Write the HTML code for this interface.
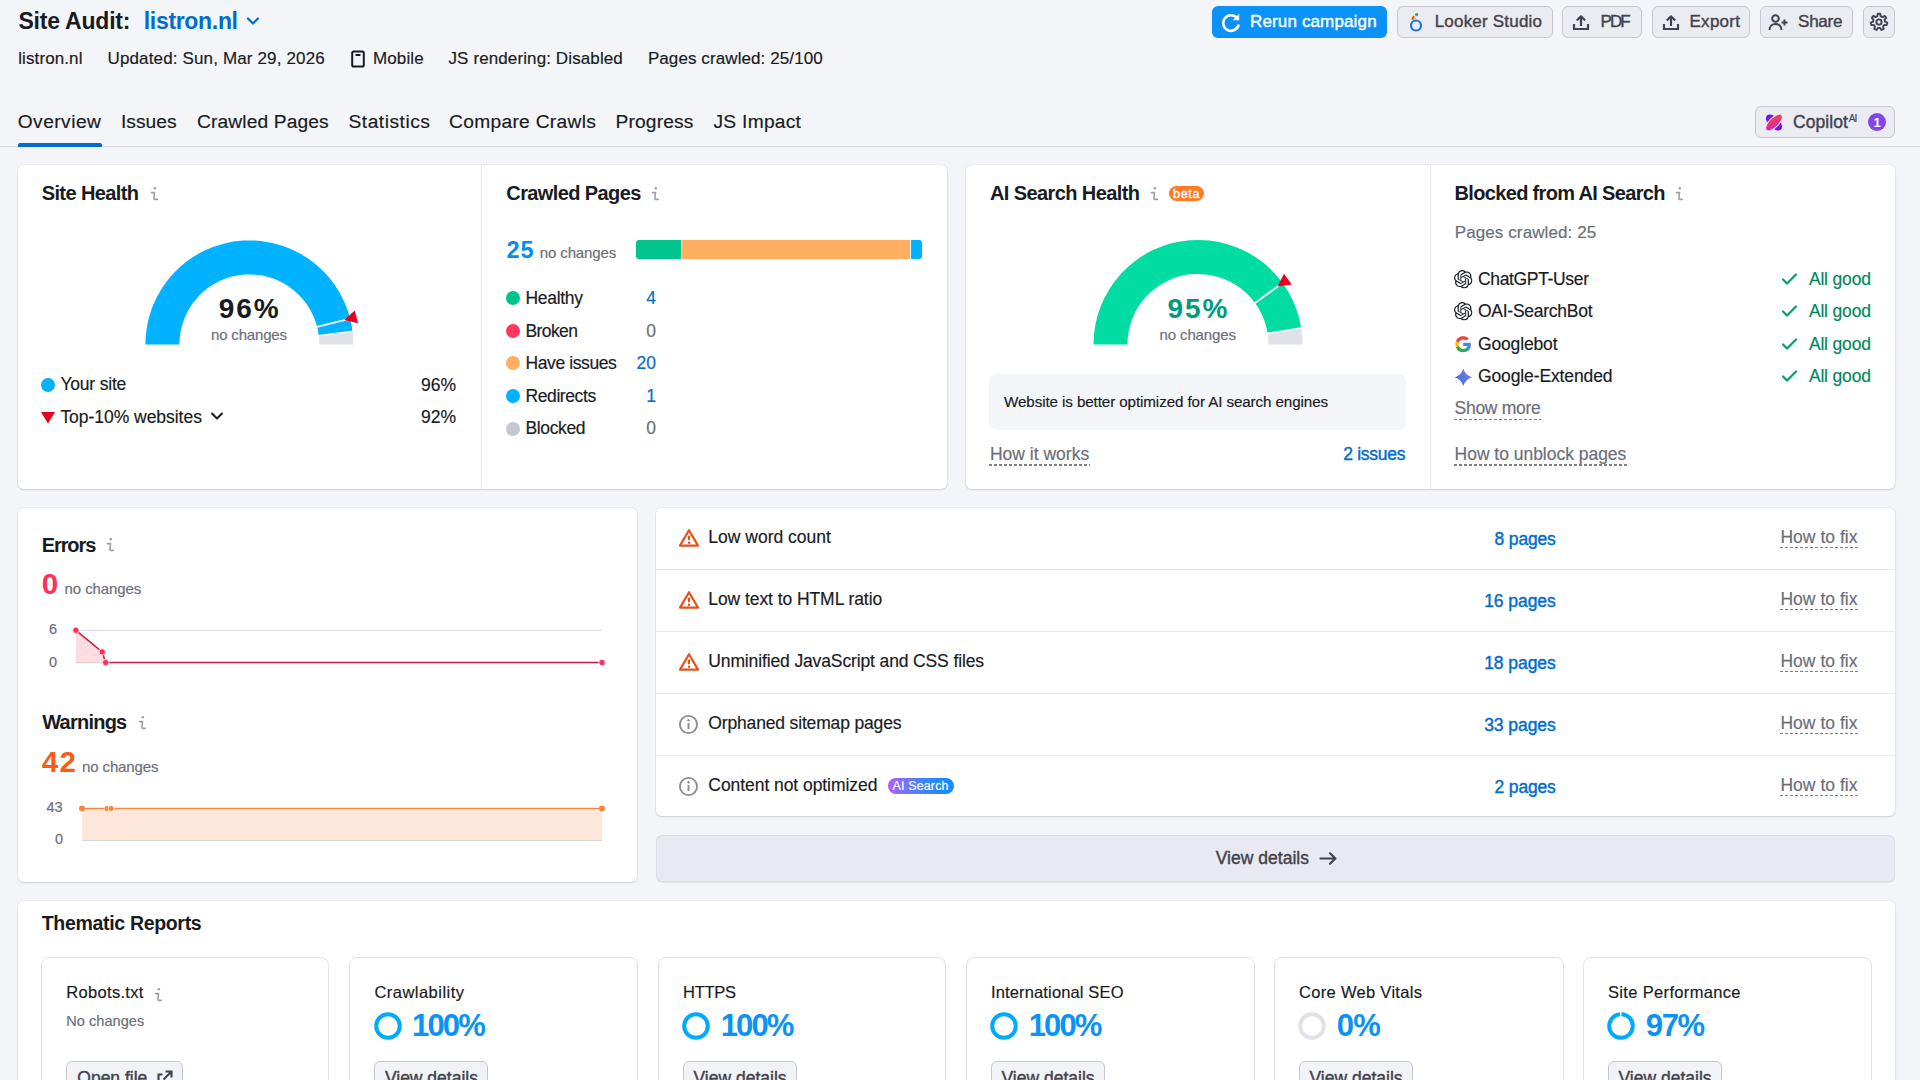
<!DOCTYPE html>
<html><head><meta charset="utf-8"><title>Site Audit</title>
<style>
*{box-sizing:border-box;margin:0;padding:0}
html,body{width:1920px;height:1080px;overflow:hidden}
body{background:#f4f5f9;font-family:"Liberation Sans",sans-serif;color:#191b23;position:relative}
.a{position:absolute;white-space:nowrap;line-height:1}
svg.a{overflow:visible}
</style></head><body>
<div class="a" style="left:18.40px;top:10.00px;font-size:23.00px;letter-spacing:-0.204px;font-weight:bold;color:#191b23">Site Audit:</div>
<div class="a" style="left:143.80px;top:10.00px;font-size:23.00px;letter-spacing:-0.324px;font-weight:bold;color:#006dca">listron.nl</div>
<svg class="a" style="left:246px;top:16px" width="14" height="10" viewBox="0 0 14 10"><path d="M2 2.5l5 5 5-5" fill="none" stroke="#006dca" stroke-width="2.2" stroke-linecap="round" stroke-linejoin="round"/></svg>
<div class="a" style="left:18.20px;top:50.00px;font-size:17.00px;letter-spacing:0.108px;-webkit-text-stroke:0.18px currentColor;color:#191b23">listron.nl</div>
<div class="a" style="left:107.50px;top:50.00px;font-size:17.00px;letter-spacing:0.144px;-webkit-text-stroke:0.18px currentColor;color:#191b23">Updated: Sun, Mar 29, 2026</div>
<svg class="a" style="left:350px;top:50px" width="16" height="18" viewBox="0 0 16 18"><rect x="2.2" y="1.6" width="11.6" height="15" rx="1.6" fill="none" stroke="#191b23" stroke-width="2"/><rect x="5.5" y="4" width="5" height="2" rx=".5" fill="#191b23"/></svg>
<div class="a" style="left:373.00px;top:50.00px;font-size:17.00px;letter-spacing:0.127px;-webkit-text-stroke:0.18px currentColor;color:#191b23">Mobile</div>
<div class="a" style="left:448.50px;top:50.00px;font-size:17.00px;letter-spacing:0.110px;-webkit-text-stroke:0.18px currentColor;color:#191b23">JS rendering: Disabled</div>
<div class="a" style="left:647.90px;top:50.00px;font-size:17.00px;letter-spacing:0.093px;-webkit-text-stroke:0.18px currentColor;color:#191b23">Pages crawled: 25/100</div>
<div class="a" style="left:1212px;top:5.5px;width:175px;height:32px;background:#0a92f7;border-radius:6px"></div>
<svg class="a" style="left:1219px;top:10px" width="24" height="24" viewBox="0 0 24 24"><path d="M18.2 8.3A7.8 7.8 0 1 0 19.4 15.5" fill="none" stroke="#fff" stroke-width="2.6" stroke-linecap="round"/><path d="M20.2 3.8v6.4h-6.4z" fill="#fff"/></svg>
<div class="a" style="left:1250.00px;top:13.00px;font-size:17.00px;letter-spacing:0.143px;-webkit-text-stroke:0.4px currentColor;color:#fff">Rerun campaign</div>
<div class="a" style="left:1397px;top:5.5px;width:156px;height:32px;background:#ebecf2;border:1px solid #c5c8d0;border-radius:6px;box-sizing:border-box"></div>
<svg class="a" style="left:1405px;top:9px" width="22" height="24" viewBox="0 0 22 24"><circle cx="11" cy="16.5" r="5" fill="none" stroke="#1a73e8" stroke-width="2.2"/><path d="M7.8 10.8a3 3 0 0 1 1.6-3.4" fill="none" stroke="#ea4335" stroke-width="2"/><circle cx="9.6" cy="9.5" r="1.1" fill="#fbbc04"/><circle cx="11.6" cy="5.6" r="1.6" fill="#34a853"/></svg>
<div class="a" style="left:1434.70px;top:13.00px;font-size:17.00px;letter-spacing:0.201px;-webkit-text-stroke:0.4px currentColor;color:#42434d">Looker Studio</div>
<div class="a" style="left:1562px;top:5.5px;width:80px;height:32px;background:#ebecf2;border:1px solid #c5c8d0;border-radius:6px;box-sizing:border-box"></div>
<svg class="a" style="left:1571px;top:13px" width="20" height="18" viewBox="0 0 20 18"><path d="M3 11v5h14v-5" fill="none" stroke="#42434d" stroke-width="2.2"/><path d="M10 13V3.5M5.8 7.5L10 3.3l4.2 4.2" fill="none" stroke="#42434d" stroke-width="2.2" stroke-linejoin="round"/></svg>
<div class="a" style="left:1600.60px;top:13.00px;font-size:17.00px;letter-spacing:-2.000px;-webkit-text-stroke:0.4px currentColor;color:#42434d">PDF</div>
<div class="a" style="left:1652px;top:5.5px;width:98px;height:32px;background:#ebecf2;border:1px solid #c5c8d0;border-radius:6px;box-sizing:border-box"></div>
<svg class="a" style="left:1660.5px;top:13px" width="20" height="18" viewBox="0 0 20 18"><path d="M3 11v5h14v-5" fill="none" stroke="#42434d" stroke-width="2.2"/><path d="M10 13V3.5M5.8 7.5L10 3.3l4.2 4.2" fill="none" stroke="#42434d" stroke-width="2.2" stroke-linejoin="round"/></svg>
<div class="a" style="left:1689.50px;top:13.00px;font-size:17.00px;letter-spacing:0.274px;-webkit-text-stroke:0.4px currentColor;color:#42434d">Export</div>
<div class="a" style="left:1760px;top:5.5px;width:93px;height:32px;background:#ebecf2;border:1px solid #c5c8d0;border-radius:6px;box-sizing:border-box"></div>
<svg class="a" style="left:1768px;top:13px" width="22" height="18" viewBox="0 0 22 18"><circle cx="7.5" cy="5.5" r="3.3" fill="none" stroke="#42434d" stroke-width="2"/><path d="M1.5 17c0-4 2.7-6 6-6s6 2 6 6" fill="none" stroke="#42434d" stroke-width="2"/><path d="M16.5 6.5v6M13.5 9.5h6" stroke="#42434d" stroke-width="2"/></svg>
<div class="a" style="left:1798.00px;top:13.00px;font-size:17.00px;letter-spacing:-0.212px;-webkit-text-stroke:0.4px currentColor;color:#42434d">Share</div>
<div class="a" style="left:1863px;top:5.5px;width:32px;height:32px;background:#ebecf2;border:1px solid #c5c8d0;border-radius:6px;box-sizing:border-box"></div>
<svg class="a" style="left:1869px;top:12px" width="20" height="20" viewBox="0 0 20 20"><g transform="translate(10,10)" fill="none" stroke="#42434d" stroke-width="1.9" stroke-linejoin="round"><path d="M-1.30 -8.20 L1.30 -8.20 L1.63 -5.78 L3.50 -4.87 L5.60 -6.13 L7.22 -4.10 L5.53 -2.33 L5.99 -0.30 L8.28 0.56 L7.70 3.09 L5.27 2.87 L3.97 4.50 L4.73 6.82 L2.39 7.95 L1.04 5.91 L-1.04 5.91 L-2.39 7.95 L-4.73 6.82 L-3.97 4.50 L-5.27 2.87 L-7.70 3.09 L-8.28 0.56 L-5.99 -0.30 L-5.53 -2.33 L-7.22 -4.10 L-5.60 -6.13 L-3.50 -4.87 L-1.63 -5.78Z"/><circle r="2.6"/></g></svg>
<div class="a" style="left:17.70px;top:112.00px;font-size:19.20px;letter-spacing:0.462px;-webkit-text-stroke:0.18px currentColor;color:#191b23">Overview</div>
<div class="a" style="left:120.90px;top:112.00px;font-size:19.20px;letter-spacing:0.062px;-webkit-text-stroke:0.18px currentColor;color:#191b23">Issues</div>
<div class="a" style="left:197.00px;top:112.00px;font-size:19.20px;letter-spacing:0.131px;-webkit-text-stroke:0.18px currentColor;color:#191b23">Crawled Pages</div>
<div class="a" style="left:348.50px;top:112.00px;font-size:19.20px;letter-spacing:0.522px;-webkit-text-stroke:0.18px currentColor;color:#191b23">Statistics</div>
<div class="a" style="left:449.00px;top:112.00px;font-size:19.20px;letter-spacing:0.308px;-webkit-text-stroke:0.18px currentColor;color:#191b23">Compare Crawls</div>
<div class="a" style="left:615.50px;top:112.00px;font-size:19.20px;letter-spacing:0.165px;-webkit-text-stroke:0.18px currentColor;color:#191b23">Progress</div>
<div class="a" style="left:713.50px;top:112.00px;font-size:19.20px;letter-spacing:0.269px;-webkit-text-stroke:0.18px currentColor;color:#191b23">JS Impact</div>
<div class="a" style="left:0px;top:146px;width:1920px;height:1px;background:#d3d6de"></div>
<div class="a" style="left:17.5px;top:143.2px;width:84.5px;height:3.5px;background:#006dca;border-radius:2px 2px 0 0"></div>
<div class="a" style="left:1755.4px;top:106px;width:139.3px;height:32.1px;background:#ebecf2;border:1px solid #c5c8d0;border-radius:6px;box-sizing:border-box"></div>
<svg class="a" style="left:1763px;top:112px" width="22" height="21" viewBox="0 0 22 21"><defs><linearGradient id="cg" x1="0" y1="1" x2="1" y2="0"><stop offset="0" stop-color="#c81fd8"/><stop offset="1" stop-color="#ff4b2b"/></linearGradient></defs><ellipse cx="11" cy="10.5" rx="10" ry="5.4" transform="rotate(45 11 10.5)" fill="#7a12f0"/><ellipse cx="11" cy="10.5" rx="10.8" ry="4.8" transform="rotate(-45 11 10.5)" fill="url(#cg)" stroke="#ebecf2" stroke-width="1"/></svg>
<div class="a" style="left:1793.10px;top:114.00px;font-size:17.50px;letter-spacing:0.055px;-webkit-text-stroke:0.4px currentColor;color:#42434d">Copilot</div>
<div class="a" style="left:1848.70px;top:114.00px;font-size:10.00px;letter-spacing:-0.850px;-webkit-text-stroke:0.18px currentColor;color:#42434d">AI</div>
<div class="a" style="left:1867.5px;top:112.8px;width:18.5px;height:18.5px;background:#8246e8;border-radius:50%"></div>
<div class="a" style="left:1873.50px;top:116.00px;font-size:13.00px;font-weight:bold;color:#fff">1</div>
<div class="a" style="left:18px;top:165px;width:929px;height:324px;background:#fff;border-radius:6px;box-shadow:0 0 0 1px rgba(30,35,60,.035),0 1px 2px rgba(30,35,60,.15)"></div>
<div class="a" style="left:481px;top:165px;width:1px;height:324px;background:#e6e7ed"></div>
<div class="a" style="left:966px;top:165px;width:929px;height:324px;background:#fff;border-radius:6px;box-shadow:0 0 0 1px rgba(30,35,60,.035),0 1px 2px rgba(30,35,60,.15)"></div>
<div class="a" style="left:1430px;top:165px;width:1px;height:324px;background:#e6e7ed"></div>
<div class="a" style="left:41.70px;top:183.00px;font-size:20.00px;letter-spacing:-0.605px;font-weight:bold;color:#191b23">Site Health</div>
<svg class="a" style="left:150px;top:186px" width="10" height="16" viewBox="0 0 10 16"><circle cx="4.8" cy="2.3" r="1.25" fill="#9c9fa8"/><path d="M1.5 6.6H4.5L3.9 12.3Q3.8 13.4 5 13.4H7.3" fill="none" stroke="#9c9fa8" stroke-width="1.6" stroke-linejoin="round" stroke-linecap="round"/></svg>
<svg class="a" style="left:0;top:0" width="1920" height="500"><path d="M145.40 344.40 A104.00 104.00 0 0 1 242.87 240.61 A104.00 104.00 0 0 1 352.58 331.37 L318.85 335.63 A70.00 70.00 0 0 0 245.00 274.54 A70.00 70.00 0 0 0 179.40 344.40 Z" fill="#00b2ff"/><path d="M352.58 331.37 A104.00 104.00 0 0 1 353.19 337.87 A104.00 104.00 0 0 1 353.40 344.40 L319.40 344.40 A70.00 70.00 0 0 0 319.26 340.00 A70.00 70.00 0 0 0 318.85 335.63 Z" fill="#e0e1e9"/><line x1="317.86" y1="335.75" x2="353.57" y2="331.24" stroke="#fff" stroke-width="1.6"/><line x1="317.20" y1="326.99" x2="350.13" y2="318.54" stroke="#fff" stroke-width="1.8"/><path d="M344.32 320.03 L358.07 323.31 L354.79 310.53 Z" fill="#e8001c"/><path d="M1093.50 344.40 A104.50 104.50 0 0 1 1189.80 240.22 A104.50 104.50 0 0 1 1301.21 328.05 L1267.63 333.37 A70.50 70.50 0 0 0 1192.47 274.12 A70.50 70.50 0 0 0 1127.50 344.40 Z" fill="#00dca2"/><path d="M1301.21 328.05 A104.50 104.50 0 0 1 1302.18 336.20 A104.50 104.50 0 0 1 1302.50 344.40 L1268.50 344.40 A70.50 70.50 0 0 0 1268.28 338.87 A70.50 70.50 0 0 0 1267.63 333.37 Z" fill="#e0e1e9"/><line x1="1266.64" y1="333.53" x2="1302.20" y2="327.90" stroke="#fff" stroke-width="1.6"/><line x1="1255.04" y1="302.96" x2="1282.54" y2="282.98" stroke="#fff" stroke-width="1.8"/><path d="M1277.69 286.50 L1291.68 284.50 L1283.92 273.82 Z" fill="#e8001c"/></svg>
<div class="a" style="left:218.80px;top:295.00px;font-size:28.00px;letter-spacing:1.965px;font-weight:bold;color:#191b23">96%</div>
<div class="a" style="left:211.00px;top:327.00px;font-size:15.00px;letter-spacing:-0.172px;-webkit-text-stroke:0.18px currentColor;color:#6c6e79">no changes</div>
<div class="a" style="left:41px;top:378px;width:14px;height:14px;background:#00b2ff;border-radius:50%"></div>
<div class="a" style="left:60.40px;top:376.00px;font-size:17.50px;letter-spacing:-0.195px;-webkit-text-stroke:0.18px currentColor;color:#191b23">Your site</div>
<div class="a" style="left:420.96px;top:377.00px;font-size:17.50px;-webkit-text-stroke:0.18px currentColor;color:#191b23">96%</div>
<svg class="a" style="left:40px;top:411px" width="16" height="13" viewBox="0 0 16 13"><path d="M1 1h14L8 12.5z" fill="#e8001c"/></svg>
<div class="a" style="left:60.40px;top:409.00px;font-size:17.50px;letter-spacing:-0.034px;-webkit-text-stroke:0.18px currentColor;color:#191b23">Top-10% websites</div>
<svg class="a" style="left:209px;top:410px" width="16" height="12" viewBox="0 0 16 12"><path d="M3 3.5l5 5 5-5" fill="none" stroke="#191b23" stroke-width="2" stroke-linecap="round" stroke-linejoin="round"/></svg>
<div class="a" style="left:420.96px;top:409.00px;font-size:17.50px;-webkit-text-stroke:0.18px currentColor;color:#191b23">92%</div>
<div class="a" style="left:506.30px;top:183.00px;font-size:20.00px;letter-spacing:-0.608px;font-weight:bold;color:#191b23">Crawled Pages</div>
<svg class="a" style="left:651px;top:186px" width="10" height="16" viewBox="0 0 10 16"><circle cx="4.8" cy="2.3" r="1.25" fill="#9c9fa8"/><path d="M1.5 6.6H4.5L3.9 12.3Q3.8 13.4 5 13.4H7.3" fill="none" stroke="#9c9fa8" stroke-width="1.6" stroke-linejoin="round" stroke-linecap="round"/></svg>
<div class="a" style="left:506.60px;top:239.00px;font-size:23.50px;letter-spacing:0.956px;font-weight:bold;color:#008ff8">25</div>
<div class="a" style="left:539.80px;top:245.00px;font-size:15.00px;letter-spacing:-0.128px;-webkit-text-stroke:0.18px currentColor;color:#6c6e79">no changes</div>
<div class="a" style="left:635.6px;top:240.3px;width:45.2px;height:18.3px;background:#00c48c;border-radius:3px 0 0 3px"></div>
<div class="a" style="left:681.8px;top:240.3px;width:228.5px;height:18.3px;background:#ffae62"></div>
<div class="a" style="left:911.3px;top:240.3px;width:11px;height:18.3px;background:#00b2ff;border-radius:0 3px 3px 0"></div>
<div class="a" style="left:506px;top:291.2px;width:14px;height:14px;background:#00c48c;border-radius:50%"></div>
<div class="a" style="left:525.50px;top:290.00px;font-size:17.50px;letter-spacing:-0.304px;-webkit-text-stroke:0.18px currentColor;color:#191b23">Healthy</div>
<div class="a" style="left:646.29px;top:290.00px;font-size:17.50px;-webkit-text-stroke:0.18px currentColor;color:#006dca">4</div>
<div class="a" style="left:506px;top:323.8px;width:14px;height:14px;background:#ff3860;border-radius:50%"></div>
<div class="a" style="left:525.50px;top:323.00px;font-size:17.50px;letter-spacing:-0.606px;-webkit-text-stroke:0.18px currentColor;color:#191b23">Broken</div>
<div class="a" style="left:646.29px;top:323.00px;font-size:17.50px;-webkit-text-stroke:0.18px currentColor;color:#6c6e79">0</div>
<div class="a" style="left:506px;top:356.4px;width:14px;height:14px;background:#ffae62;border-radius:50%"></div>
<div class="a" style="left:525.50px;top:355.00px;font-size:17.50px;letter-spacing:-0.403px;-webkit-text-stroke:0.18px currentColor;color:#191b23">Have issues</div>
<div class="a" style="left:636.53px;top:355.00px;font-size:17.50px;-webkit-text-stroke:0.18px currentColor;color:#006dca">20</div>
<div class="a" style="left:506px;top:389px;width:14px;height:14px;background:#00b2ff;border-radius:50%"></div>
<div class="a" style="left:525.50px;top:388.00px;font-size:17.50px;letter-spacing:-0.405px;-webkit-text-stroke:0.18px currentColor;color:#191b23">Redirects</div>
<div class="a" style="left:646.29px;top:388.00px;font-size:17.50px;-webkit-text-stroke:0.18px currentColor;color:#006dca">1</div>
<div class="a" style="left:506px;top:421.6px;width:14px;height:14px;background:#c4c7cf;border-radius:50%"></div>
<div class="a" style="left:525.50px;top:420.00px;font-size:17.50px;letter-spacing:-0.359px;-webkit-text-stroke:0.18px currentColor;color:#191b23">Blocked</div>
<div class="a" style="left:646.29px;top:420.00px;font-size:17.50px;-webkit-text-stroke:0.18px currentColor;color:#6c6e79">0</div>
<div class="a" style="left:990.00px;top:183.00px;font-size:20.00px;letter-spacing:-0.597px;font-weight:bold;color:#191b23">AI Search Health</div>
<svg class="a" style="left:1150px;top:186px" width="10" height="16" viewBox="0 0 10 16"><circle cx="4.8" cy="2.3" r="1.25" fill="#9c9fa8"/><path d="M1.5 6.6H4.5L3.9 12.3Q3.8 13.4 5 13.4H7.3" fill="none" stroke="#9c9fa8" stroke-width="1.6" stroke-linejoin="round" stroke-linecap="round"/></svg>
<div class="a" style="left:1168.8px;top:185.6px;width:35.6px;height:15.9px;background:#ff7a22;border-radius:8px"></div>
<div class="a" style="left:1173.00px;top:188.00px;font-size:12.50px;letter-spacing:0.719px;-webkit-text-stroke:0.4px currentColor;color:#fff">beta</div>
<div class="a" style="left:1167.50px;top:295.00px;font-size:28.00px;letter-spacing:1.965px;font-weight:bold;color:#009b7c">95%</div>
<div class="a" style="left:1159.50px;top:327.00px;font-size:15.00px;letter-spacing:-0.117px;-webkit-text-stroke:0.18px currentColor;color:#6c6e79">no changes</div>
<div class="a" style="left:989.4px;top:374px;width:416.6px;height:55.6px;background:#f4f5f9;border-radius:7px"></div>
<div class="a" style="left:1004.00px;top:394.00px;font-size:15.20px;letter-spacing:-0.101px;-webkit-text-stroke:0.18px currentColor;color:#191b23">Website is better optimized for AI search engines</div>
<div class="a" style="left:989.90px;top:446.00px;font-size:17.50px;letter-spacing:0.011px;-webkit-text-stroke:0.18px currentColor;color:#6c6e79">How it works</div>
<div class="a" style="left:989px;top:464.25px;width:101px;height:1.5px;background-image:linear-gradient(90deg,#7d808b 0 3px,transparent 3px 5px);background-size:5px 1.5px"></div>
<div class="a" style="left:1343.20px;top:446.00px;font-size:17.50px;letter-spacing:-0.269px;-webkit-text-stroke:0.4px currentColor;color:#006dca">2 issues</div>
<div class="a" style="left:1454.60px;top:183.00px;font-size:20.00px;letter-spacing:-0.667px;font-weight:bold;color:#191b23">Blocked from AI Search</div>
<svg class="a" style="left:1675px;top:186px" width="10" height="16" viewBox="0 0 10 16"><circle cx="4.8" cy="2.3" r="1.25" fill="#9c9fa8"/><path d="M1.5 6.6H4.5L3.9 12.3Q3.8 13.4 5 13.4H7.3" fill="none" stroke="#9c9fa8" stroke-width="1.6" stroke-linejoin="round" stroke-linecap="round"/></svg>
<div class="a" style="left:1454.70px;top:224.00px;font-size:17.00px;letter-spacing:0.108px;-webkit-text-stroke:0.18px currentColor;color:#6c6e79">Pages crawled: 25</div>
<svg class="a" style="left:1454px;top:270px" width="18.5" height="18.5" viewBox="0 0 18.5 18.5"><svg viewBox="0 0 24 24" width="18.5" height="18.5"><path fill="#191b23" d="M22.2819 9.8211a5.9847 5.9847 0 0 0-.5157-4.9108 6.0462 6.0462 0 0 0-6.5098-2.9A6.0651 6.0651 0 0 0 4.9807 4.1818a5.9847 5.9847 0 0 0-3.9977 2.9 6.0462 6.0462 0 0 0 .7427 7.0966 5.98 5.98 0 0 0 .511 4.9107 6.051 6.051 0 0 0 6.5146 2.9001A5.9847 5.9847 0 0 0 13.2599 24a6.0557 6.0557 0 0 0 5.7718-4.2058 5.9894 5.9894 0 0 0 3.9977-2.9001 6.0557 6.0557 0 0 0-.7475-7.0729zm-9.022 12.6081a4.4755 4.4755 0 0 1-2.8764-1.0408l.1419-.0804 4.7783-2.7582a.7948.7948 0 0 0 .3927-.6813v-6.7369l2.02 1.1686a.071.071 0 0 1 .038.052v5.5826a4.504 4.504 0 0 1-4.4945 4.4944zm-9.6607-4.1254a4.4708 4.4708 0 0 1-.5346-3.0137l.142.0852 4.783 2.7582a.7712.7712 0 0 0 .7806 0l5.8428-3.3685v2.3324a.0804.0804 0 0 1-.0332.0615L9.74 19.9502a4.4992 4.4992 0 0 1-6.1408-1.6464zM2.3408 7.8956a4.485 4.485 0 0 1 2.3655-1.9728V11.6a.7664.7664 0 0 0 .3879.6765l5.8144 3.3543-2.0201 1.1685a.0757.0757 0 0 1-.071 0l-4.8303-2.7865A4.504 4.504 0 0 1 2.3408 7.872zm16.5963 3.8558L13.1038 8.364 15.1192 7.2a.0757.0757 0 0 1 .071 0l4.8303 2.7913a4.4944 4.4944 0 0 1-.6765 8.1042v-5.6772a.79.79 0 0 0-.407-.667zm2.0107-3.0231l-.142-.0852-4.7735-2.7818a.7759.7759 0 0 0-.7854 0L9.409 9.2297V6.8974a.0662.0662 0 0 1 .0284-.0615l4.8303-2.7866a4.4992 4.4992 0 0 1 6.6802 4.66zM8.3065 12.863l-2.02-1.1638a.0804.0804 0 0 1-.038-.0567V6.0742a4.4992 4.4992 0 0 1 7.3757-3.4537l-.142.0805L8.704 5.459a.7948.7948 0 0 0-.3927.6813zm1.0976-2.3654l2.602-1.4998 2.6069 1.4998v2.9994l-2.5974 1.4997-2.6067-1.4997Z"/></svg></svg>
<div class="a" style="left:1478.00px;top:271.00px;font-size:17.50px;letter-spacing:-0.341px;-webkit-text-stroke:0.18px currentColor;color:#191b23">ChatGPT-User</div>
<svg class="a" style="left:1781px;top:272.7px" width="17" height="13" viewBox="0 0 17 13"><path d="M2 6.5l4 4 9-9" fill="none" stroke="#009f76" stroke-width="2.2" stroke-linecap="round" stroke-linejoin="round"/></svg>
<div class="a" style="left:1808.90px;top:271.00px;font-size:17.50px;letter-spacing:-0.166px;-webkit-text-stroke:0.18px currentColor;color:#00875f">All good</div>
<svg class="a" style="left:1454px;top:302.3px" width="18.5" height="18.5" viewBox="0 0 18.5 18.5"><svg viewBox="0 0 24 24" width="18.5" height="18.5"><path fill="#191b23" d="M22.2819 9.8211a5.9847 5.9847 0 0 0-.5157-4.9108 6.0462 6.0462 0 0 0-6.5098-2.9A6.0651 6.0651 0 0 0 4.9807 4.1818a5.9847 5.9847 0 0 0-3.9977 2.9 6.0462 6.0462 0 0 0 .7427 7.0966 5.98 5.98 0 0 0 .511 4.9107 6.051 6.051 0 0 0 6.5146 2.9001A5.9847 5.9847 0 0 0 13.2599 24a6.0557 6.0557 0 0 0 5.7718-4.2058 5.9894 5.9894 0 0 0 3.9977-2.9001 6.0557 6.0557 0 0 0-.7475-7.0729zm-9.022 12.6081a4.4755 4.4755 0 0 1-2.8764-1.0408l.1419-.0804 4.7783-2.7582a.7948.7948 0 0 0 .3927-.6813v-6.7369l2.02 1.1686a.071.071 0 0 1 .038.052v5.5826a4.504 4.504 0 0 1-4.4945 4.4944zm-9.6607-4.1254a4.4708 4.4708 0 0 1-.5346-3.0137l.142.0852 4.783 2.7582a.7712.7712 0 0 0 .7806 0l5.8428-3.3685v2.3324a.0804.0804 0 0 1-.0332.0615L9.74 19.9502a4.4992 4.4992 0 0 1-6.1408-1.6464zM2.3408 7.8956a4.485 4.485 0 0 1 2.3655-1.9728V11.6a.7664.7664 0 0 0 .3879.6765l5.8144 3.3543-2.0201 1.1685a.0757.0757 0 0 1-.071 0l-4.8303-2.7865A4.504 4.504 0 0 1 2.3408 7.872zm16.5963 3.8558L13.1038 8.364 15.1192 7.2a.0757.0757 0 0 1 .071 0l4.8303 2.7913a4.4944 4.4944 0 0 1-.6765 8.1042v-5.6772a.79.79 0 0 0-.407-.667zm2.0107-3.0231l-.142-.0852-4.7735-2.7818a.7759.7759 0 0 0-.7854 0L9.409 9.2297V6.8974a.0662.0662 0 0 1 .0284-.0615l4.8303-2.7866a4.4992 4.4992 0 0 1 6.6802 4.66zM8.3065 12.863l-2.02-1.1638a.0804.0804 0 0 1-.038-.0567V6.0742a4.4992 4.4992 0 0 1 7.3757-3.4537l-.142.0805L8.704 5.459a.7948.7948 0 0 0-.3927.6813zm1.0976-2.3654l2.602-1.4998 2.6069 1.4998v2.9994l-2.5974 1.4997-2.6067-1.4997Z"/></svg></svg>
<div class="a" style="left:1478.00px;top:303.00px;font-size:17.50px;letter-spacing:-0.266px;-webkit-text-stroke:0.18px currentColor;color:#191b23">OAI-SearchBot</div>
<svg class="a" style="left:1781px;top:305px" width="17" height="13" viewBox="0 0 17 13"><path d="M2 6.5l4 4 9-9" fill="none" stroke="#009f76" stroke-width="2.2" stroke-linecap="round" stroke-linejoin="round"/></svg>
<div class="a" style="left:1808.90px;top:303.00px;font-size:17.50px;letter-spacing:-0.166px;-webkit-text-stroke:0.18px currentColor;color:#00875f">All good</div>
<svg class="a" style="left:1454px;top:335px" width="18.5" height="18.5" viewBox="0 0 18.5 18.5"><path d="M16.9 9.4c0-.6-.1-1.2-.2-1.7H9.25v3.3h4.3a3.7 3.7 0 0 1-1.6 2.4v2h2.6c1.5-1.4 2.35-3.4 2.35-6z" fill="#4285f4"/><path d="M9.25 17.2c2.2 0 4-.7 5.3-1.9l-2.6-2c-.7.5-1.6.8-2.7.8-2.1 0-3.9-1.4-4.5-3.3H2.1v2.1a8 8 0 0 0 7.15 4.3z" fill="#34a853"/><path d="M4.75 10.8a4.8 4.8 0 0 1 0-3.1V5.6H2.1a8 8 0 0 0 0 7.2z" fill="#fbbc05"/><path d="M9.25 4.4c1.2 0 2.3.4 3.1 1.2l2.3-2.3A8 8 0 0 0 2.1 5.6l2.65 2.1c.6-1.9 2.4-3.3 4.5-3.3z" fill="#ea4335"/></svg>
<div class="a" style="left:1478.00px;top:336.00px;font-size:17.50px;letter-spacing:-0.158px;-webkit-text-stroke:0.18px currentColor;color:#191b23">Googlebot</div>
<svg class="a" style="left:1781px;top:337.7px" width="17" height="13" viewBox="0 0 17 13"><path d="M2 6.5l4 4 9-9" fill="none" stroke="#009f76" stroke-width="2.2" stroke-linecap="round" stroke-linejoin="round"/></svg>
<div class="a" style="left:1808.90px;top:336.00px;font-size:17.50px;letter-spacing:-0.166px;-webkit-text-stroke:0.18px currentColor;color:#00875f">All good</div>
<svg class="a" style="left:1454px;top:367.5px" width="18.5" height="18.5" viewBox="0 0 18.5 18.5"><defs><linearGradient id="gm" x1="0" y1="1" x2="1" y2="0"><stop offset="0" stop-color="#1c7cf4"/><stop offset="1" stop-color="#9b72cb"/></linearGradient></defs><path d="M9.25 .5Q11.3 7.2 18 9.25 11.3 11.3 9.25 18 7.2 11.3 .5 9.25 7.2 7.2 9.25 .5z" fill="url(#gm)"/></svg>
<div class="a" style="left:1478.00px;top:368.00px;font-size:17.50px;letter-spacing:-0.121px;-webkit-text-stroke:0.18px currentColor;color:#191b23">Google-Extended</div>
<svg class="a" style="left:1781px;top:370.2px" width="17" height="13" viewBox="0 0 17 13"><path d="M2 6.5l4 4 9-9" fill="none" stroke="#009f76" stroke-width="2.2" stroke-linecap="round" stroke-linejoin="round"/></svg>
<div class="a" style="left:1808.90px;top:368.00px;font-size:17.50px;letter-spacing:-0.166px;-webkit-text-stroke:0.18px currentColor;color:#00875f">All good</div>
<div class="a" style="left:1454.60px;top:400.00px;font-size:17.50px;letter-spacing:-0.288px;-webkit-text-stroke:0.18px currentColor;color:#6c6e79">Show more</div>
<div class="a" style="left:1454px;top:418.75px;width:87px;height:1.5px;background-image:linear-gradient(90deg,#7d808b 0 3px,transparent 3px 5px);background-size:5px 1.5px"></div>
<div class="a" style="left:1454.60px;top:446.00px;font-size:17.50px;letter-spacing:-0.026px;-webkit-text-stroke:0.18px currentColor;color:#6c6e79">How to unblock pages</div>
<div class="a" style="left:1454px;top:464.25px;width:173px;height:1.5px;background-image:linear-gradient(90deg,#7d808b 0 3px,transparent 3px 5px);background-size:5px 1.5px"></div>
<div class="a" style="left:18px;top:508px;width:619px;height:374px;background:#fff;border-radius:6px;box-shadow:0 0 0 1px rgba(30,35,60,.035),0 1px 2px rgba(30,35,60,.15)"></div>
<div class="a" style="left:41.70px;top:535.00px;font-size:20.00px;letter-spacing:-1.090px;font-weight:bold;color:#191b23">Errors</div>
<svg class="a" style="left:106px;top:537px" width="10" height="16" viewBox="0 0 10 16"><circle cx="4.8" cy="2.3" r="1.25" fill="#9c9fa8"/><path d="M1.5 6.6H4.5L3.9 12.3Q3.8 13.4 5 13.4H7.3" fill="none" stroke="#9c9fa8" stroke-width="1.6" stroke-linejoin="round" stroke-linecap="round"/></svg>
<div class="a" style="left:41.70px;top:569.00px;font-size:29.50px;font-weight:bold;color:#ff3058">0</div>
<div class="a" style="left:64.60px;top:581.00px;font-size:15.00px;letter-spacing:-0.094px;-webkit-text-stroke:0.18px currentColor;color:#6c6e79">no changes</div>
<div class="a" style="left:49.00px;top:622.00px;font-size:14.50px;-webkit-text-stroke:0.18px currentColor;color:#6c6e79">6</div>
<div class="a" style="left:49.00px;top:655.00px;font-size:14.50px;-webkit-text-stroke:0.18px currentColor;color:#6c6e79">0</div>
<svg class="a" style="left:0;top:600px" width="640" height="260"><line x1="80" y1="30.3" x2="602" y2="30.3" stroke="#e3e4ea" stroke-width="1.5"/><line x1="76" y1="62.5" x2="104" y2="62.5" stroke="#c9cbd3" stroke-width="1.5"/><path d="M75.9 30.3 L102.2 51.9 L105.6 62.5 L75.9 62.5Z" fill="#ffdde0"/><path d="M75.9 30.3 L102.2 51.9 L105.6 62.5 L602 62.5" fill="none" stroke="#c41c44" stroke-width="1.5"/><circle cx="75.9" cy="30.3" r="3.2" fill="#ff2e5b" stroke="#fff" stroke-width=".8"/><circle cx="102.2" cy="51.9" r="3.2" fill="#ff2e5b" stroke="#fff" stroke-width=".8"/><circle cx="105.6" cy="62.5" r="3.2" fill="#ff2e5b" stroke="#fff" stroke-width=".8"/><circle cx="602" cy="62.5" r="3.2" fill="#ff2e5b" stroke="#fff" stroke-width=".8"/></svg>
<div class="a" style="left:42.20px;top:712.00px;font-size:20.00px;letter-spacing:-0.764px;font-weight:bold;color:#191b23">Warnings</div>
<svg class="a" style="left:138px;top:715px" width="10" height="16" viewBox="0 0 10 16"><circle cx="4.8" cy="2.3" r="1.25" fill="#9c9fa8"/><path d="M1.5 6.6H4.5L3.9 12.3Q3.8 13.4 5 13.4H7.3" fill="none" stroke="#9c9fa8" stroke-width="1.6" stroke-linejoin="round" stroke-linecap="round"/></svg>
<div class="a" style="left:41.80px;top:747.00px;font-size:29.50px;letter-spacing:1.181px;font-weight:bold;color:#ff5a13">42</div>
<div class="a" style="left:82.00px;top:759.00px;font-size:15.00px;letter-spacing:-0.117px;-webkit-text-stroke:0.18px currentColor;color:#6c6e79">no changes</div>
<div class="a" style="left:46.40px;top:800.00px;font-size:14.50px;letter-spacing:0.069px;-webkit-text-stroke:0.18px currentColor;color:#6c6e79">43</div>
<div class="a" style="left:55.00px;top:832.00px;font-size:14.50px;-webkit-text-stroke:0.18px currentColor;color:#6c6e79">0</div>
<svg class="a" style="left:0;top:780px" width="640" height="80"><rect x="82" y="28.5" width="520" height="31.5" fill="#ffe6da"/><line x1="82" y1="60.5" x2="602" y2="60.5" stroke="#d6d8de" stroke-width="1.2"/><line x1="82" y1="28.5" x2="602" y2="28.5" stroke="#f5893b" stroke-width="1.6"/><circle cx="82" cy="28.5" r="3" fill="#f5893b"/><circle cx="107" cy="28.5" r="3" fill="#fff"/><circle cx="107" cy="28.5" r="2.6" fill="#f5893b"/><circle cx="111.2" cy="28.5" r="3" fill="#f5893b" stroke="#fff" stroke-width=".8"/><circle cx="602" cy="28.5" r="3" fill="#f5893b"/></svg>
<div class="a" style="left:656px;top:508px;width:1239px;height:308px;background:#fff;border-radius:6px;box-shadow:0 0 0 1px rgba(30,35,60,.035),0 1px 2px rgba(30,35,60,.15)"></div>
<div class="a" style="left:656px;top:568.5px;width:1239px;height:1.5px;background:#e9eaef"></div>
<div class="a" style="left:656px;top:630.5px;width:1239px;height:1.5px;background:#e9eaef"></div>
<div class="a" style="left:656px;top:692.5px;width:1239px;height:1.5px;background:#e9eaef"></div>
<div class="a" style="left:656px;top:754.5px;width:1239px;height:1.5px;background:#e9eaef"></div>
<svg class="a" style="left:678px;top:527.5px" width="22" height="20" viewBox="0 0 22 20"><path d="M11 2.2L20 17.6H2z" fill="none" stroke="#e5531a" stroke-width="2.2" stroke-linejoin="round"/><path d="M11 7.6v4.6" stroke="#e5531a" stroke-width="2.2"/><circle cx="11" cy="14.8" r="1.2" fill="#e5531a"/></svg>
<div class="a" style="left:708.30px;top:529.00px;font-size:17.50px;-webkit-text-stroke:0.18px currentColor;color:#191b23">Low word count</div>
<div class="a" style="left:1494.60px;top:531.00px;font-size:17.50px;letter-spacing:-0.176px;-webkit-text-stroke:0.4px currentColor;color:#006dca">8 pages</div>
<div class="a" style="left:1780.40px;top:529.00px;font-size:17.50px;letter-spacing:0.031px;-webkit-text-stroke:0.18px currentColor;color:#6c6e79">How to fix</div>
<div class="a" style="left:1780px;top:546.75px;width:78px;height:1.5px;background-image:linear-gradient(90deg,#7d808b 0 3px,transparent 3px 5px);background-size:5px 1.5px"></div>
<svg class="a" style="left:678px;top:589.5px" width="22" height="20" viewBox="0 0 22 20"><path d="M11 2.2L20 17.6H2z" fill="none" stroke="#e5531a" stroke-width="2.2" stroke-linejoin="round"/><path d="M11 7.6v4.6" stroke="#e5531a" stroke-width="2.2"/><circle cx="11" cy="14.8" r="1.2" fill="#e5531a"/></svg>
<div class="a" style="left:708.30px;top:591.00px;font-size:17.50px;letter-spacing:-0.071px;-webkit-text-stroke:0.18px currentColor;color:#191b23">Low text to HTML ratio</div>
<div class="a" style="left:1484.20px;top:593.00px;font-size:17.50px;letter-spacing:-0.059px;-webkit-text-stroke:0.4px currentColor;color:#006dca">16 pages</div>
<div class="a" style="left:1780.40px;top:591.00px;font-size:17.50px;letter-spacing:0.031px;-webkit-text-stroke:0.18px currentColor;color:#6c6e79">How to fix</div>
<div class="a" style="left:1780px;top:608.75px;width:78px;height:1.5px;background-image:linear-gradient(90deg,#7d808b 0 3px,transparent 3px 5px);background-size:5px 1.5px"></div>
<svg class="a" style="left:678px;top:651.5px" width="22" height="20" viewBox="0 0 22 20"><path d="M11 2.2L20 17.6H2z" fill="none" stroke="#e5531a" stroke-width="2.2" stroke-linejoin="round"/><path d="M11 7.6v4.6" stroke="#e5531a" stroke-width="2.2"/><circle cx="11" cy="14.8" r="1.2" fill="#e5531a"/></svg>
<div class="a" style="left:708.30px;top:653.00px;font-size:17.50px;letter-spacing:-0.130px;-webkit-text-stroke:0.18px currentColor;color:#191b23">Unminified JavaScript and CSS files</div>
<div class="a" style="left:1484.20px;top:655.00px;font-size:17.50px;letter-spacing:-0.059px;-webkit-text-stroke:0.4px currentColor;color:#006dca">18 pages</div>
<div class="a" style="left:1780.40px;top:653.00px;font-size:17.50px;letter-spacing:0.031px;-webkit-text-stroke:0.18px currentColor;color:#6c6e79">How to fix</div>
<div class="a" style="left:1780px;top:670.75px;width:78px;height:1.5px;background-image:linear-gradient(90deg,#7d808b 0 3px,transparent 3px 5px);background-size:5px 1.5px"></div>
<svg class="a" style="left:678px;top:714px" width="21" height="21" viewBox="0 0 21 21"><circle cx="10.5" cy="10.5" r="8.6" fill="none" stroke="#8b8e99" stroke-width="1.8"/><path d="M10.5 9v6" stroke="#8b8e99" stroke-width="1.9"/><circle cx="10.5" cy="6.2" r="1.2" fill="#8b8e99"/></svg>
<div class="a" style="left:708.30px;top:715.00px;font-size:17.50px;letter-spacing:-0.158px;-webkit-text-stroke:0.18px currentColor;color:#191b23">Orphaned sitemap pages</div>
<div class="a" style="left:1484.20px;top:717.00px;font-size:17.50px;letter-spacing:-0.059px;-webkit-text-stroke:0.4px currentColor;color:#006dca">33 pages</div>
<div class="a" style="left:1780.40px;top:715.00px;font-size:17.50px;letter-spacing:0.031px;-webkit-text-stroke:0.18px currentColor;color:#6c6e79">How to fix</div>
<div class="a" style="left:1780px;top:732.75px;width:78px;height:1.5px;background-image:linear-gradient(90deg,#7d808b 0 3px,transparent 3px 5px);background-size:5px 1.5px"></div>
<svg class="a" style="left:678px;top:776px" width="21" height="21" viewBox="0 0 21 21"><circle cx="10.5" cy="10.5" r="8.6" fill="none" stroke="#8b8e99" stroke-width="1.8"/><path d="M10.5 9v6" stroke="#8b8e99" stroke-width="1.9"/><circle cx="10.5" cy="6.2" r="1.2" fill="#8b8e99"/></svg>
<div class="a" style="left:708.30px;top:777.00px;font-size:17.50px;letter-spacing:-0.057px;-webkit-text-stroke:0.18px currentColor;color:#191b23">Content not optimized</div>
<div class="a" style="left:1494.60px;top:779.00px;font-size:17.50px;letter-spacing:-0.176px;-webkit-text-stroke:0.4px currentColor;color:#006dca">2 pages</div>
<div class="a" style="left:1780.40px;top:777.00px;font-size:17.50px;letter-spacing:0.031px;-webkit-text-stroke:0.18px currentColor;color:#6c6e79">How to fix</div>
<div class="a" style="left:1780px;top:794.75px;width:78px;height:1.5px;background-image:linear-gradient(90deg,#7d808b 0 3px,transparent 3px 5px);background-size:5px 1.5px"></div>
<div class="a" style="left:887.8px;top:777.8px;width:65.9px;height:16.6px;border-radius:8px;background:linear-gradient(90deg,#b35cf8 0%,#6a78fb 30%,#2a88ff 65%,#158dfc 100%)"></div>
<div class="a" style="left:892.50px;top:780.00px;font-size:12.50px;letter-spacing:0.141px;-webkit-text-stroke:0.18px currentColor;color:#fff">AI Search</div>
<div class="a" style="left:656px;top:835px;width:1239px;height:47px;background:#e9eaf1;border-radius:6px;box-shadow:inset 0 0 0 1px rgba(25,27,35,.06),0 1px 1px rgba(25,27,35,.06)"></div>
<div class="a" style="left:1215.70px;top:850.00px;font-size:17.50px;letter-spacing:0.022px;-webkit-text-stroke:0.4px currentColor;color:#42434d">View details</div>
<svg class="a" style="left:1318px;top:851px" width="21" height="15" viewBox="0 0 21 15"><path d="M2.5 7.5h15M12 2.3l5.3 5.2L12 12.7" fill="none" stroke="#42434d" stroke-width="2.2" stroke-linecap="round" stroke-linejoin="round"/></svg>
<div class="a" style="left:18px;top:901px;width:1877px;height:400px;background:#fff;border-radius:6px;box-shadow:0 0 0 1px rgba(30,35,60,.035),0 1px 2px rgba(30,35,60,.15)"></div>
<div class="a" style="left:41.70px;top:914.00px;font-size:19.50px;letter-spacing:-0.315px;font-weight:bold;color:#191b23">Thematic Reports</div>
<div class="a" style="left:41.3px;top:957px;width:288.2px;height:200px;border:1px solid #e1e2e8;border-radius:8px;background:#fff;box-sizing:border-box"></div>
<div class="a" style="left:66.30px;top:984.00px;font-size:16.50px;letter-spacing:0.312px;-webkit-text-stroke:0.18px currentColor;color:#191b23">Robots.txt</div>
<svg class="a" style="left:154px;top:987px" width="10" height="16" viewBox="0 0 10 16"><circle cx="4.8" cy="2.3" r="1.25" fill="#9c9fa8"/><path d="M1.5 6.6H4.5L3.9 12.3Q3.8 13.4 5 13.4H7.3" fill="none" stroke="#9c9fa8" stroke-width="1.6" stroke-linejoin="round" stroke-linecap="round"/></svg>
<div class="a" style="left:66.30px;top:1014.00px;font-size:14.50px;letter-spacing:0.056px;-webkit-text-stroke:0.18px currentColor;color:#6c6e79">No changes</div>
<div class="a" style="left:66.3px;top:1061.3px;width:117.2px;height:40px;background:#f2f3f6;border:1px solid #c5c8d0;border-radius:6px;box-sizing:border-box"></div>
<div class="a" style="left:77.30px;top:1070.00px;font-size:17.50px;-webkit-text-stroke:0.4px currentColor;color:#42434d">Open file</div>
<svg class="a" style="left:155.8px;top:1067.5px" width="18" height="16" viewBox="0 0 18 16"><path d="M2.5 15V6.5H6.5M7.5 11.5L14.5 4.5M9.5 3.5H15.5V9.5" fill="none" stroke="#42434d" stroke-width="2.1"/></svg>
<div class="a" style="left:349.4px;top:957px;width:289.1px;height:200px;border:1px solid #e1e2e8;border-radius:8px;background:#fff;box-sizing:border-box"></div>
<div class="a" style="left:374.40px;top:984.00px;font-size:16.50px;letter-spacing:0.477px;-webkit-text-stroke:0.18px currentColor;color:#191b23">Crawlability</div>
<svg class="a" style="left:373.8px;top:1011.6px" width="28" height="28" viewBox="0 0 28 28"><circle cx="14" cy="14" r="11.8" fill="none" stroke="#00aaff" stroke-width="4"/></svg>
<div class="a" style="left:412.10px;top:1010.00px;font-size:31.00px;letter-spacing:-1.894px;font-weight:bold;color:#0a93f2">100%</div>
<div class="a" style="left:374.4px;top:1061.3px;width:114px;height:40px;background:#f2f3f6;border:1px solid #c5c8d0;border-radius:6px;box-sizing:border-box"></div>
<div class="a" style="left:384.90px;top:1070.00px;font-size:17.50px;-webkit-text-stroke:0.4px currentColor;color:#42434d">View details</div>
<div class="a" style="left:658px;top:957px;width:288px;height:200px;border:1px solid #e1e2e8;border-radius:8px;background:#fff;box-sizing:border-box"></div>
<div class="a" style="left:683.00px;top:984.00px;font-size:16.50px;letter-spacing:-0.270px;-webkit-text-stroke:0.18px currentColor;color:#191b23">HTTPS</div>
<svg class="a" style="left:682.4px;top:1011.6px" width="28" height="28" viewBox="0 0 28 28"><circle cx="14" cy="14" r="11.8" fill="none" stroke="#00aaff" stroke-width="4"/></svg>
<div class="a" style="left:720.70px;top:1010.00px;font-size:31.00px;letter-spacing:-1.894px;font-weight:bold;color:#0a93f2">100%</div>
<div class="a" style="left:683px;top:1061.3px;width:114px;height:40px;background:#f2f3f6;border:1px solid #c5c8d0;border-radius:6px;box-sizing:border-box"></div>
<div class="a" style="left:693.50px;top:1070.00px;font-size:17.50px;-webkit-text-stroke:0.4px currentColor;color:#42434d">View details</div>
<div class="a" style="left:966px;top:957px;width:289px;height:200px;border:1px solid #e1e2e8;border-radius:8px;background:#fff;box-sizing:border-box"></div>
<div class="a" style="left:991.00px;top:984.00px;font-size:16.50px;letter-spacing:0.140px;-webkit-text-stroke:0.18px currentColor;color:#191b23">International SEO</div>
<svg class="a" style="left:990.4px;top:1011.6px" width="28" height="28" viewBox="0 0 28 28"><circle cx="14" cy="14" r="11.8" fill="none" stroke="#00aaff" stroke-width="4"/></svg>
<div class="a" style="left:1028.70px;top:1010.00px;font-size:31.00px;letter-spacing:-1.894px;font-weight:bold;color:#0a93f2">100%</div>
<div class="a" style="left:991px;top:1061.3px;width:114px;height:40px;background:#f2f3f6;border:1px solid #c5c8d0;border-radius:6px;box-sizing:border-box"></div>
<div class="a" style="left:1001.50px;top:1070.00px;font-size:17.50px;-webkit-text-stroke:0.4px currentColor;color:#42434d">View details</div>
<div class="a" style="left:1274px;top:957px;width:289.5px;height:200px;border:1px solid #e1e2e8;border-radius:8px;background:#fff;box-sizing:border-box"></div>
<div class="a" style="left:1299.00px;top:984.00px;font-size:16.50px;letter-spacing:0.312px;-webkit-text-stroke:0.18px currentColor;color:#191b23">Core Web Vitals</div>
<svg class="a" style="left:1298.4px;top:1011.6px" width="28" height="28" viewBox="0 0 28 28"><circle cx="14" cy="14" r="11.8" fill="none" stroke="#e0e1e9" stroke-width="4"/></svg>
<div class="a" style="left:1336.70px;top:1010.00px;font-size:31.00px;letter-spacing:-0.795px;font-weight:bold;color:#0a93f2">0%</div>
<div class="a" style="left:1299px;top:1061.3px;width:114px;height:40px;background:#f2f3f6;border:1px solid #c5c8d0;border-radius:6px;box-sizing:border-box"></div>
<div class="a" style="left:1309.50px;top:1070.00px;font-size:17.50px;-webkit-text-stroke:0.4px currentColor;color:#42434d">View details</div>
<div class="a" style="left:1583px;top:957px;width:288.5px;height:200px;border:1px solid #e1e2e8;border-radius:8px;background:#fff;box-sizing:border-box"></div>
<div class="a" style="left:1608.00px;top:984.00px;font-size:16.50px;letter-spacing:0.336px;-webkit-text-stroke:0.18px currentColor;color:#191b23">Site Performance</div>
<svg class="a" style="left:1607.4px;top:1011.6px" width="28" height="28" viewBox="0 0 28 28"><circle cx="14" cy="14" r="11.8" fill="none" stroke="#00aaff" stroke-width="4" stroke-dasharray="72.22 74.14" transform="rotate(-88 14 14)"/></svg>
<div class="a" style="left:1645.70px;top:1010.00px;font-size:31.00px;letter-spacing:-1.289px;font-weight:bold;color:#0a93f2">97%</div>
<div class="a" style="left:1608px;top:1061.3px;width:114px;height:40px;background:#f2f3f6;border:1px solid #c5c8d0;border-radius:6px;box-sizing:border-box"></div>
<div class="a" style="left:1618.50px;top:1070.00px;font-size:17.50px;-webkit-text-stroke:0.4px currentColor;color:#42434d">View details</div>
</body></html>
